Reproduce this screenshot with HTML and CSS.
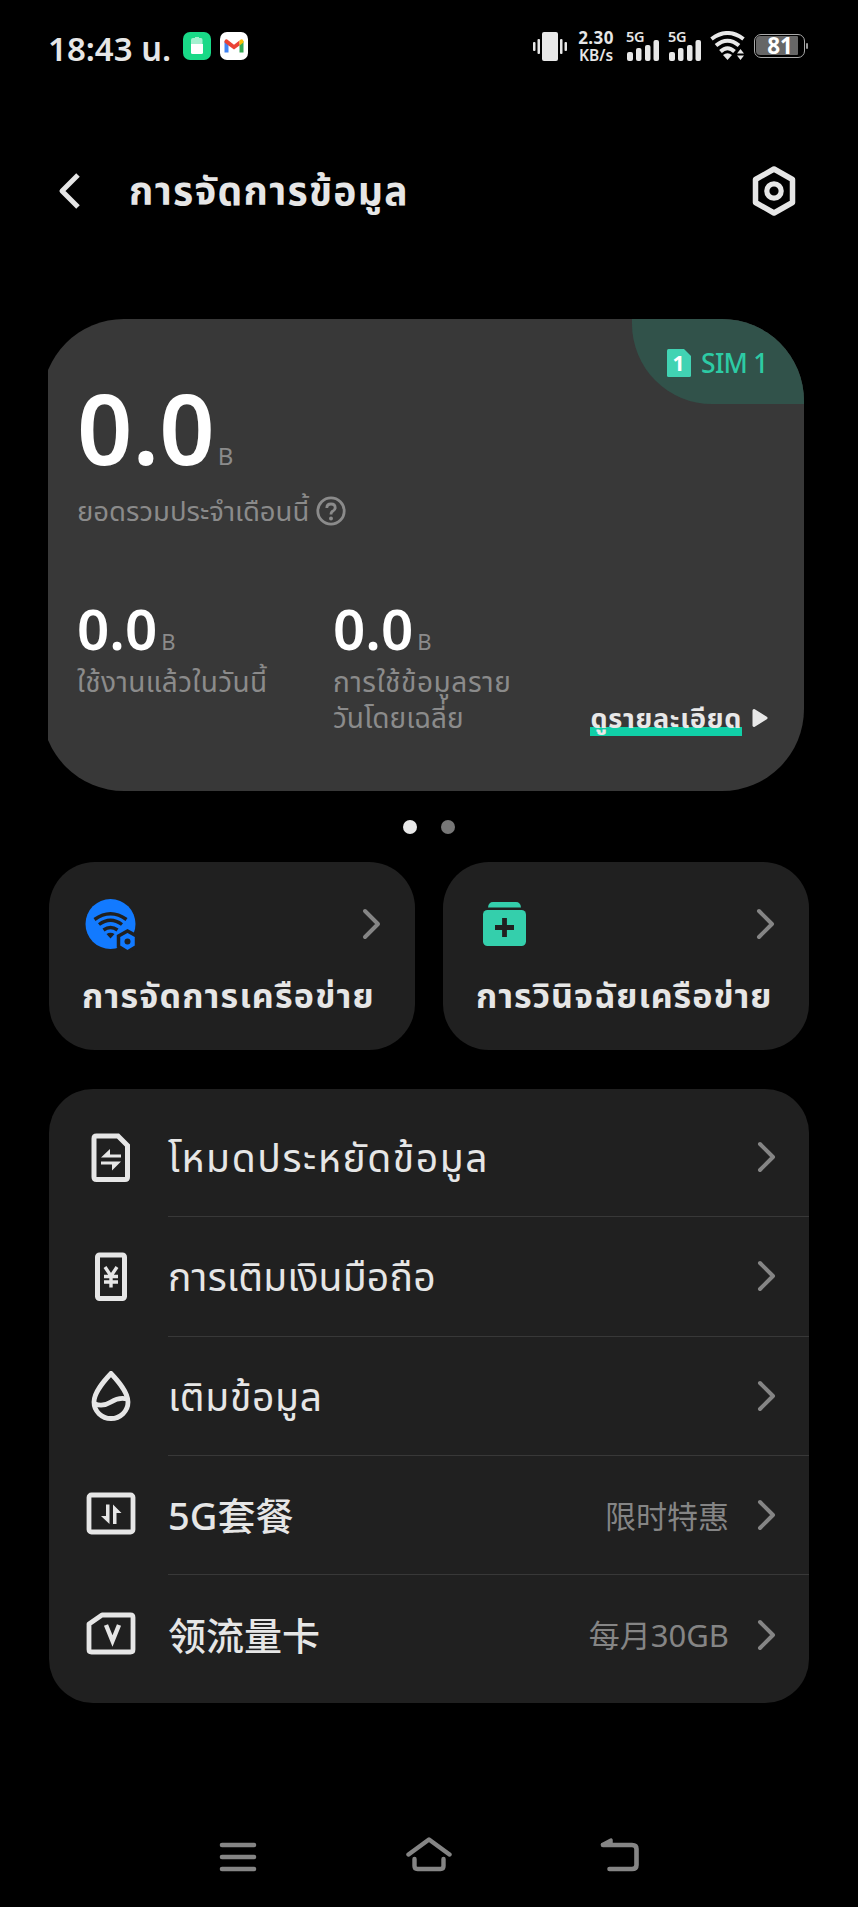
FILE: index.html
```html
<!DOCTYPE html>
<html lang="th">
<head>
<meta charset="utf-8">
<title>การจัดการข้อมูล</title>
<link rel="stylesheet" href="styles.css">
</head>
<body>
<svg class="defs" width="0" height="0">
  <symbol id="chevron" viewBox="0 0 20 32"><path d="M3 3 16 16 3 29" fill="none" stroke="#858585" stroke-width="4" stroke-linecap="round" stroke-linejoin="round"/></symbol>
  <symbol id="signal" viewBox="0 0 33 21"><rect x="0" y="12" width="6" height="9" rx="2"/><rect x="9" y="8" width="5.5" height="13" rx="2"/><rect x="18" y="5" width="5.5" height="16" rx="2"/><rect x="26.5" y="0" width="5.5" height="21" rx="2"/></symbol>
</svg>
<div class="screen">
  <header class="status">
    <div class="status-left">
      <span class="clock">18:43 น.</span>
      <svg class="app-icon" width="28" height="28" viewBox="0 0 28 28"><rect width="28" height="28" rx="7" fill="#19d987"/><path d="M10 6h2V5h4v1h2q1.500 0 1.500 2v5h-11.500V8q0-2 2-2z" fill="#a3f0cf"/><path d="M8 12h12v8.500q0 1.500-1.500 1.500h-9q-1.500 0-1.500-1.500z" fill="#fff"/></svg>
      <svg width="28" height="28" viewBox="0 0 28 28"><rect width="28" height="28" rx="7" fill="#fff"/><path d="M4.500 9v11.500h4V12z" fill="#4285f4"/><path d="M19.500 12v8.500h4V9z" fill="#34a853"/><path d="M4.500 9q1-3 4-.5l5.500 4.200 5.500-4.200v5L14 17.500 8.500 13.500l-4-3z" fill="#ea4335"/><path d="M19.500 8.500v5l4-3V9q-1-3-4-.5z" fill="#fbbc04"/></svg>
    </div>
    <div class="status-right">
      <svg class="vibrate" width="34" height="29" viewBox="0 0 34 29" fill="#e8e8e8"><rect x="9" width="16" height="29" rx="2"/><rect x="0" y="10" width="2.500" height="9" rx="1"/><rect x="4.500" y="7" width="2.500" height="15" rx="1"/><rect x="27" y="7" width="2.500" height="15" rx="1"/><rect x="31.500" y="10" width="2.500" height="9" rx="1"/></svg>
      <div class="speed"><span class="speed-num">2.30</span><span class="speed-unit">KB/s</span></div>
      <div class="cell"><span class="gen">5G</span><svg width="33" height="21" fill="#e8e8e8"><use href="#signal"/></svg></div>
      <div class="cell"><span class="gen">5G</span><svg width="33" height="21" fill="#e8e8e8"><use href="#signal"/></svg></div>
      <svg class="wifi" width="36" height="30" viewBox="0 0 36 30"><g fill="none" stroke="#e8e8e8" stroke-width="4"><path d="M1.500 8Q17.500-4 33.500 8"/><path d="M6 14.500Q17.500 5 29 14.500"/><path d="M10.500 20.500Q17.500 14 24.500 20.500"/></g><path d="M13 24q4.500-3.500 9 0l-4.500 5z" fill="#e8e8e8"/><path d="M30.500 18l3.500 4.500h-7zM30.500 29l3.500-4.500h-7z" fill="#e8e8e8"/></svg>
      <div class="battery"><span class="level">81</span></div><i class="nub"></i>
    </div>
  </header>

  <div class="titlebar">
    <svg class="back" width="24" height="38" viewBox="0 0 24 38"><path d="M20 3 4 19 20 35" fill="none" stroke="#e6e6e6" stroke-width="5" stroke-linejoin="round"/></svg>
    <h1 class="title">การจัดการข้อมูล</h1>
    <svg width="46" height="52" viewBox="0 0 46 52" fill="none" stroke="#e6e6e6"><path d="M23 4 41.500 14.500V37.500L23 48 4.500 37.500V14.500z" stroke-width="5.500" stroke-linejoin="round"/><circle cx="23" cy="26" r="7.200" stroke-width="5.200"/></svg>
  </div>

  <section class="card">
    <div class="card-bg"></div>
    <div class="sim">
      <svg width="24" height="28" viewBox="0 0 24 28"><path d="M0 1.500Q0 0 1.500 0H17l7 7v19.500q0 1.500-1.500 1.500h-21Q0 28 0 26.500z" fill="#41d3b3"/><text class="sim-num" x="11.500" y="22" text-anchor="middle">1</text></svg>
      <span class="sim-label">SIM 1</span>
    </div>
    <div class="usage">
      <div class="total"><span class="num">0.0</span><span class="unit">B</span></div>
      <div class="total-label"><span class="t-total">ยอดรวมประจำเดือนนี้</span>
        <svg width="30" height="30" viewBox="0 0 30 30"><circle cx="15" cy="15" r="13.200" fill="none" stroke="#8b8b8b" stroke-width="2.800"/><path d="M10.800 12Q10.800 8 15 8T19.200 11.800Q19.200 13.800 17 15 15 16 15 18.500" fill="none" stroke="#8b8b8b" stroke-width="2.800"/><circle cx="15" cy="22.500" r="2" fill="#8b8b8b"/></svg>
      </div>
      <div class="stats">
        <div class="stat">
          <div class="small"><span class="num">0.0</span><span class="unit">B</span></div>
          <div class="desc"><span class="t-today">ใช้งานแล้วในวันนี้</span></div>
        </div>
        <div class="stat">
          <div class="small"><span class="num">0.0</span><span class="unit">B</span></div>
          <div class="desc"><span class="t-avg1">การใช้ข้อมูลราย</span><br><span class="t-avg2">วันโดยเฉลี่ย</span></div>
        </div>
        <div class="more"><span class="link">ดูรายละเอียด</span><svg width="16" height="20" viewBox="0 0 16 20"><path d="M2 2.500 14 10 2 17.500z" fill="#e8e8e8" stroke="#e8e8e8" stroke-width="3" stroke-linejoin="round"/></svg></div>
      </div>
    </div>
  </section>

  <div class="dots"><i class="dot on"></i><i class="dot"></i></div>

  <div class="tiles">
    <div class="tile">
      <div class="tile-top">
        <svg class="net" width="54" height="52" viewBox="-1 0 54 52"><circle cx="25.500" cy="25" r="25" fill="#127aff"/><g fill="none" stroke="#202020" stroke-width="3.400"><path d="M9.500 20.500Q25.500 9 41.500 20.500"/><path d="M14 25.500Q25.500 17 37 25.500"/><path d="M18.500 31Q25.500 26 32.500 31"/></g><path d="M21.500 35q4-2.500 8 0l-4 4.500z" fill="#202020"/><path d="M42.500 32 51.500 37V47.500L42.500 53 33.500 47.500V37z" fill="#127aff" stroke="#202020" stroke-width="3.500"/><circle cx="42.500" cy="42.500" r="3" fill="#202020"/></svg>
        <svg class="tile-arrow" width="20" height="32"><use href="#chevron"/></svg>
      </div>
      <div class="tile-text"><span class="t-manage">การจัดการเครือข่าย</span></div>
    </div>
    <div class="tile">
      <div class="tile-top">
        <svg class="kit" width="52" height="52" viewBox="0 0 52 52"><path d="M10 8.500Q10.500 3 15 3H38Q42.500 3 43 8.500z" fill="#34cfac"/><rect x="5" y="11" width="43" height="36" rx="4.500" fill="#34cfac"/><path d="M17 28.500H36M26.500 19V38" stroke="#202020" stroke-width="4.800"/></svg>
        <svg class="tile-arrow" width="20" height="32"><use href="#chevron"/></svg>
      </div>
      <div class="tile-text"><span class="t-diag">การวินิจฉัยเครือข่าย</span></div>
    </div>
  </div>

  <div class="list">
    <div class="row">
      <svg class="row-icon" width="50" height="50" viewBox="0 0 50 50"><path d="M10.500 3H32L41.500 12.500V44Q41.500 46.500 39 46.500H10.500Q8 46.500 8 44V5.500Q8 3 10.500 3z" fill="none" stroke="#e6e6e6" stroke-width="5"/><path d="M15 24.500 24 16V21.500H35V24.500zM35 28.500 26 37.500V31.500H15V28.500z" fill="#e6e6e6"/></svg>
      <div class="row-body"><span class="t-save">โหมดประหยัดข้อมูล</span><svg width="20" height="32"><use href="#chevron"/></svg></div>
    </div>
    <div class="row">
      <svg class="row-icon" width="50" height="50" viewBox="0 0 50 50"><rect x="11.500" y="3" width="27" height="43.500" rx="2" fill="none" stroke="#e6e6e6" stroke-width="5"/><path d="M19 15 25 24 31 15M25 24V35.500M18 24.500H32M18 30H32" fill="none" stroke="#e6e6e6" stroke-width="3.400"/></svg>
      <div class="row-body"><span class="t-topup">การเติมเงินมือถือ</span><svg width="20" height="32"><use href="#chevron"/></svg></div>
    </div>
    <div class="row">
      <svg class="row-icon" width="50" height="50" viewBox="0 0 50 50" fill="none" stroke="#e6e6e6" stroke-width="4.800"><path d="M25 2.500C18 10 8 21 8 31A17 16.500 0 0 0 42 31C42 21 32 10 25 2.500z"/><path d="M9 33Q17 36 25 31T41 28"/></svg>
      <div class="row-body"><span class="t-data">เติมข้อมูล</span><svg width="20" height="32"><use href="#chevron"/></svg></div>
    </div>
    <div class="row">
      <svg class="row-icon" width="50" height="50" viewBox="0 0 50 50"><rect x="3" y="5" width="44" height="37" rx="2.500" fill="none" stroke="#e6e6e6" stroke-width="4.800"/><path d="M20 14.500H23.500V34L15 26H20zM27 34V14.500L35.500 23H30.500V34z" fill="#e6e6e6"/></svg>
      <div class="row-body"><span class="zh"><span class="latin">5G</span>套餐</span><span class="value">限时特惠</span><svg width="20" height="32"><use href="#chevron"/></svg></div>
    </div>
    <div class="row">
      <svg class="row-icon" width="50" height="50" viewBox="0 0 50 50"><path d="M16 5H44.500Q47 5 47 7.500V39.500Q47 42 44.500 42H5.500Q3 42 3 39.500V14z" fill="none" stroke="#e6e6e6" stroke-width="4.800" stroke-linejoin="round"/><path d="M20 15 26.500 31 33 15" fill="none" stroke="#e6e6e6" stroke-width="4.400"/></svg>
      <div class="row-body"><span class="zh">领流量卡</span><span class="value">每月<span class="latin">30GB</span></span><svg width="20" height="32"><use href="#chevron"/></svg></div>
    </div>
  </div>

  <nav class="nav">
    <svg width="46" height="36" viewBox="0 0 46 36"><path d="M7 9H39M7 21H39M7 33H39" fill="none" stroke="#858585" stroke-width="4.600" stroke-linecap="round"/></svg>
    <svg width="46" height="36" viewBox="0 0 46 36"><path d="M2.500 18.500 23 3.500 43.500 18.500M8.500 23V30Q8.500 33 11.500 33H34.500Q37.500 33 37.500 30V23" fill="none" stroke="#858585" stroke-width="4.400" stroke-linecap="round" stroke-linejoin="round"/></svg>
    <svg width="46" height="36" viewBox="0 0 46 36"><path d="M6 9H35Q39.500 9 39.500 13V29Q39.500 33 35 33H12.500" fill="none" stroke="#858585" stroke-width="4.600" stroke-linecap="round"/><path d="M5.500 8.500 14 4V8.500z" fill="#858585" stroke="#858585" stroke-width="3.500" stroke-linejoin="round"/></svg>
  </nav>
</div>
</body>
</html>
```
FILE: styles.css
```css
* { box-sizing: border-box; }
body { margin: 0; background: #000; }
.defs { position: absolute; }
svg { display: block; flex: none; }
.screen {
  width: 858px; height: 1907px; background: #000; color: #e6e6e6; overflow: hidden;
  font-family: "Noto Sans", "Noto Sans Thai", "Noto Sans CJK SC", sans-serif;
  display: flex; flex-direction: column; white-space: nowrap;
}
.screen > * { flex: none; }

/* Status bar */
.status { height: 92px; padding: 0 50px 0 48px; display: flex; justify-content: space-between; align-items: center; }
.status-left, .status-right { display: flex; align-items: center; height: 92px; }
.status-left svg { margin-right: 9px; }
.clock { width: 135px; font-size: 33px; font-weight: 600; line-height: 40px; padding-top: 5px; }
.speed { display: flex; flex-direction: column; width: 38px; height: 33px; margin-left: 10px; margin-right: 11px; align-items: center; justify-content: space-between; font-weight: 700; }
.speed-num { font-size: 17px; line-height: 16px; letter-spacing: 0.4px; }
.speed-unit { font-size: 15.5px; line-height: 16px; font-weight: 600; }
.cell { width: 42px; height: 30px; position: relative; display: flex; align-items: flex-end; }
.cell svg { margin-left: 1px; }
.gen { position: absolute; left: 0; top: -1px; font-size: 14.5px; line-height: 13px; font-weight: 600; letter-spacing: -0.3px; }
.battery { width: 51px; height: 24px; margin-left: 8px; border: 1.5px solid #aaa; border-radius: 7px; padding: 1px 6px 1px 1px; }
.level { display: block; background: #666; border-radius: 4px 1px 1px 4px; height: 19px; font-size: 22.5px; font-weight: 700; line-height: 19px; color: #fff; text-align: right; padding-right: 5px; }
.nub { width: 2px; height: 6px; margin-left: 1px; background: #999; border-radius: 1px; }

/* Title bar */
.titlebar { height: 227px; padding: 0 61px 30px 58px; display: flex; align-items: center; }
.titlebar svg:last-child { margin-left: auto; }
.title { margin: 0 0 2px 47px; font-size: 39px; font-weight: 700; line-height: 50px; letter-spacing: 1.3px; }

/* Usage card */
.card { position: relative; margin-left: 48px; width: 756px; height: 472px; overflow: hidden; color: #8b8b8b; }
.card-bg { position: absolute; inset: 0 0 0 -6px; background: #383838; border-radius: 82px; }
.usage { position: relative; padding: 53px 36px 0 29px; }
.sim { position: absolute; top: 0; right: 0; width: 172px; height: 85px; background: #31524a; border-radius: 0 82px 0 80px; display: flex; align-items: center; padding: 3px 0 0 35px; gap: 10px; }
.sim-num { font: 700 21px "Noto Sans", sans-serif; fill: #fff; }
.sim-label { font-size: 26.5px; line-height: 30px; letter-spacing: -0.7px; color: #2dcba5; font-weight: 500; }
.total { height: 119px; display: flex; align-items: baseline; }
.num { color: #fff; font-weight: 600; }
.total .num { font-size: 97px; line-height: 110px; }
.total .unit { font-size: 24px; margin-left: 3px; }
.total-label { height: 40px; display: flex; align-items: center; gap: 7px; font-size: 27.5px; line-height: 40px; }
.stats { display: flex; margin-top: 65px; align-items: flex-start; }
.stat { width: 256px; }
.small { display: flex; align-items: baseline; height: 67px; }
.small .num { font-size: 56.5px; line-height: 66px; }
.small .unit { font-size: 22px; margin-left: 4px; }
.desc { font-size: 28px; line-height: 36px; }
.t-today { letter-spacing: 0.4px; }
.t-avg1 { letter-spacing: 0.6px; }
.more { margin-left: auto; margin-top: 104px; display: flex; align-items: center; gap: 10px; }
.link { color: #e8e8e8; font-size: 27px; font-weight: 700; line-height: 36px; letter-spacing: 0.7px; background: linear-gradient(#10cfa7, #10cfa7) 0 100% / 100% 9px no-repeat; }

.dots { height: 71px; display: flex; justify-content: center; align-items: center; gap: 24px; }
.dot { width: 14px; height: 14px; border-radius: 50%; background: #777; }
.dot.on { background: #e8e8e8; }

/* Tiles */
.tiles { display: flex; gap: 28px; padding: 0 49px; }
.tile { flex: 1; height: 188px; background: #202020; border-radius: 46px; padding: 37px 33px 0 35px; }
.tile-top { display: flex; justify-content: space-between; align-items: center; height: 52px; }
.tile-arrow { margin-bottom: 3px; }
.tile-text { font-size: 34px; font-weight: 700; line-height: 44px; margin: 22px 0 0 -2px; letter-spacing: 1px; }
.t-manage { letter-spacing: 1.2px; }

/* Menu list */
.list { margin: 39px 49px 0; height: 614px; padding: 9px 0; background: #202020; border-radius: 44px; }
.row { display: flex; height: 119.25px; align-items: center; padding-left: 37px; }
.row-icon { margin-right: 32px; }
.row-body { flex: 1; height: 100%; display: flex; align-items: center; padding-right: 32px; border-bottom: 1px solid #383838; font-size: 39px; line-height: 52px; }
.row-body svg { margin-left: 28px; }
.row-body > :first-child { margin-right: auto; }
.row:last-child .row-body { border-bottom: 0; }
.t-save { letter-spacing: 1.6px; }
.t-topup { letter-spacing: 0.2px; }
.t-data { letter-spacing: 0.7px; }
.zh { font-family: "Noto Sans CJK SC", sans-serif; font-size: 38px; font-weight: 500; }
.row-body > .zh { padding-bottom: 1px; }
.value { color: #858585; font-size: 31px; font-family: "Noto Sans CJK SC", sans-serif; }
.latin { font-family: "Noto Sans", sans-serif; }

.nav { margin-top: 133px; padding: 0 215px; display: flex; justify-content: space-between; }
```
